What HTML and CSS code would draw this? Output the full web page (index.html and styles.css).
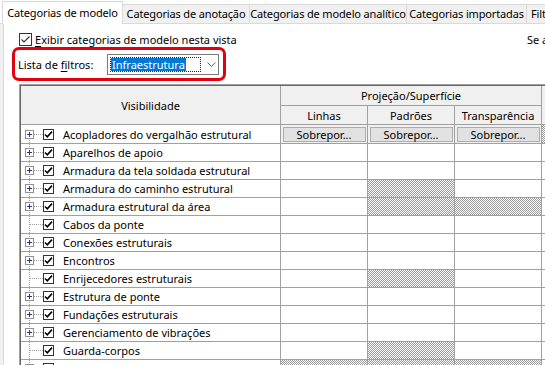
FILE: index.html
```html
<!DOCTYPE html>
<html lang="pt-br">
<head>
    <meta charset="UTF-8">
    <title>Visibilidade/Gráficos</title>
    <link rel="stylesheet" href="styles.css">
</head>
<body>
    <div class="tabs">
        <div class="tab active t1">Categorias de modelo</div>
        <div class="tab t2">Categorias de anotação</div>
        <div class="tab t3">Categorias de modelo analítico</div>
        <div class="tab t4">Categorias importadas</div>
        <div class="tab t5">Filtros</div>
    </div>

    <div class="panel">
        <div class="show-row">
            <label class="show">
                <span class="check big">
                    <svg width="13" height="13" viewBox="0 0 13 13"><rect x="0.5" y="0.5" width="12" height="12" fill="#fff" stroke="#333"/><path d="M2.5 6.5 L5 9 L10.5 3.5" fill="none" stroke="#333" stroke-width="1.1"/></svg>
                </span>
                <span><u>E</u>xibir categorias de modelo nesta vista</span>
            </label>
            <span class="hint">Se alguma categoria não estiver visível na vista</span>
        </div>

        <div class="filter-box">
            <span class="filter-label">Lista de <u>f</u>iltros:</span>
            <div class="combo">
                <span class="combo-focus"><span class="combo-value">Infraestrutura</span></span>
                <svg class="chevron" width="9" height="5" viewBox="0 0 9 5"><path d="M0.5 0.5 L4.5 4.5 L8.5 0.5" fill="none" stroke="#555"/></svg>
            </div>
        </div>

        <div class="grid-frame">
            <div class="grid" id="grid">
                <div class="hd vis">Visibilidade</div>
                <div class="hd proj">Projeção/Superfície</div>
                <div class="hd more-top"></div>
                <div class="hd">Linhas</div>
                <div class="hd">Padrões</div>
                <div class="hd">Transparência</div>
            </div>
        </div>
    </div>

    <script>
        // linhas da tabela: nome, tem expansor, colunas hachuradas (0 linhas, 1 padrões, 2 transparência, 3 próxima)
        const rows = [
            ["Acopladores do vergalhão estrutural", true, []],
            ["Aparelhos de apoio", true, []],
            ["Armadura da tela soldada estrutural", true, []],
            ["Armadura do caminho estrutural", true, [1]],
            ["Armadura estrutural da área", true, [1, 2]],
            ["Cabos da ponte", false, []],
            ["Conexões estruturais", true, []],
            ["Encontros", true, []],
            ["Enrijecedores estruturais", false, [1]],
            ["Estrutura de ponte", true, []],
            ["Fundações estruturais", true, []],
            ["Gerenciamento de vibrações", true, []],
            ["Guarda-corpos", false, [1]],
            ["", true, [0, 1, 2]]
        ];

        const grid = document.getElementById("grid");
        const checkSvg = '<svg width="11" height="11" viewBox="0 0 11 11"><rect x="0.5" y="0.5" width="10" height="10" fill="#fff" stroke="#333"/><path d="M2 5.5 L4.3 7.8 L9 2.6" fill="none" stroke="#000" stroke-width="1.6"/></svg>';

        rows.forEach(function(row, i) {
            const name = document.createElement("div");
            name.className = "cell name" + (i === 0 ? " first" : "");
            let tree = row[1]
                ? '<span class="exp"><svg width="9" height="9" viewBox="0 0 9 9"><rect x="0.5" y="0.5" width="8" height="8" fill="#fff" stroke="#919191"/><path d="M2 4.5 H7 M4.5 2 V7" stroke="#1c3c8c"/></svg></span><span class="dots"></span>'
                : '<span class="leaf"></span><span class="dots long"></span>';
            name.innerHTML = tree + '<span class="check">' + checkSvg + '</span><span class="label">' + row[0] + '</span>';
            grid.appendChild(name);

            for (let c = 0; c < 4; c++) {
                const cell = document.createElement("div");
                cell.className = "cell";
                if (row[2].indexOf(c) !== -1) cell.className += " hatch";
                if (i === 0) {
                    cell.className += " over";
                    if (c < 3) cell.innerHTML = '<button class="btn">Sobrepor...</button>';
                    else cell.className += " hatch";
                }
                grid.appendChild(cell);
            }
        });
    </script>
</body>
</html>
```

FILE: styles.css
```css
* {
    box-sizing: border-box;
}
body {
    margin: 0;
    width: 545px;
    height: 365px;
    overflow: hidden;
    background: #fff;
    color: #000;
    font-family: "Noto Sans", sans-serif;
    font-size: 11px;
}
u {
    text-decoration: underline;
    text-underline-offset: 2px;
}

/* abas */
.tabs {
    display: flex;
    align-items: flex-end;
    height: 24px;
    padding-left: 2px;
    border-bottom: 1px solid #d9d9d9;
}
.tab {
    flex: none;
    height: 19px;
    line-height: 18px;
    text-align: center;
    letter-spacing: -0.15px;
    background: #f0f0f0;
    border: 1px solid #d9d9d9;
    border-bottom: none;
    margin-left: -1px;
    white-space: nowrap;
    overflow: hidden;
}
.tab.active {
    height: 23px;
    line-height: 22px;
    background: #fff;
    margin-bottom: -1px;
    margin-left: 0;
    z-index: 1;
}
.t1 { width: 121px; }
.t2 { width: 128px; }
.t3 { width: 158px; }
.t4 { width: 121px; }
.t5 { width: 60px; text-align: left; padding-left: 4px; }

.panel {
    height: 341px;
    margin-left: 3px;
    border-left: 1px solid #d9d9d9;
    box-shadow: -3px 0 0 #f0f0f0;
    overflow: hidden;
}

/* linha exibir */
.show-row {
    display: grid;
    grid-template-columns: 504px max-content;
    align-items: center;
    height: 14px;
    margin-top: 8px;
    padding-left: 15px;
    white-space: nowrap;
}
.show {
    display: flex;
    align-items: center;
    gap: 3px;
}
.check {
    display: flex;
}
.hint {
    margin-left: 4px;
}

/* lista de filtros */
.filter-box {
    display: flex;
    align-items: center;
    width: 214px;
    height: 34px;
    margin-top: 1px;
    margin-left: 8px;
    padding-left: 3px;
    border: 3px solid #e2000f;
    border-radius: 7px;
}
.filter-label {
    width: 89px;
}
.combo {
    display: flex;
    align-items: center;
    width: 112px;
    height: 21px;
    border: 1px solid #7a7a7a;
    padding: 0 2px;
}
.combo-focus {
    display: flex;
    width: 93px;
    height: 15px;
    border: 1px dotted #222;
}
.combo-value {
    background: #0078d7;
    color: #fff;
    line-height: 13px;
    padding: 0 1px;
}
.chevron {
    margin-left: 6px;
}

/* tabela */
.grid-frame {
    width: 620px;
    margin-top: 3px;
    margin-left: 15px;
    border-top: 1px solid #a0a0a0;
    border-left: 1px solid #a0a0a0;
}
.grid {
    display: grid;
    grid-template-columns: 260px 87px 87px 87px 87px;
    grid-template-rows: 20px 19px 19px;
    grid-auto-rows: 18px;
    border-top: 1px solid #696969;
    border-left: 1px solid #696969;
}
.hd, .cell {
    border-right: 1px solid #a0a0a0;
    border-bottom: 1px solid #a0a0a0;
    white-space: nowrap;
    overflow: hidden;
}
.hd {
    display: flex;
    align-items: center;
    justify-content: center;
    background: #f0f0f0;
}
.vis {
    grid-row: span 2;
}
.proj {
    grid-column: span 3;
}
.more-top {
    grid-row: span 2;
}
.cell.over {
    display: flex;
    align-items: center;
    justify-content: center;
    background: #f0f0f0;
}
.btn {
    width: 83px;
    height: 15px;
    padding: 0;
    font: inherit;
    line-height: 13px;
    color: #000;
    background: #e1e1e1;
    border: 1px solid #adadad;
}
.hatch {
    background: repeating-conic-gradient(#9a9a9a 0 25%, #fff 0 50%) 0 0 / 2px 2px;
}
.cell.over.hatch {
    background: repeating-conic-gradient(#9a9a9a 0 25%, #fff 0 50%) 0 0 / 2px 2px;
}

/* arvore */
.name {
    display: flex;
    align-items: center;
    padding-left: 4px;
    background-image: repeating-linear-gradient(to bottom, #a0a0a0 0 1px, transparent 1px 2px);
    background-size: 1px 100%;
    background-position: 8px 0;
    background-repeat: no-repeat;
}
.name.first {
    background-position: 8px 9px;
}
.exp {
    display: flex;
    width: 9px;
}
.leaf {
    width: 5px;
}
.dots {
    width: 9px;
    height: 1px;
    background: repeating-linear-gradient(to right, #a0a0a0 0 1px, transparent 1px 2px);
}
.dots.long {
    width: 13px;
}
.label {
    margin-left: 9px;
}
```
